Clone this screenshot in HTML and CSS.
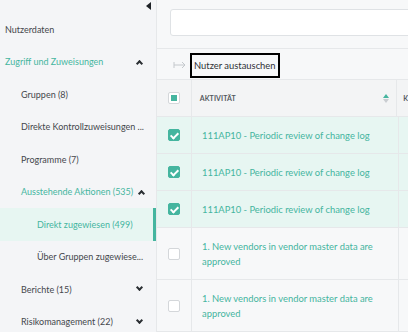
FILE: index.html
```html
<!DOCTYPE html>
<html lang="de">
<head>
    <meta charset="UTF-8">
    <title>Nutzer</title>
    <link rel="stylesheet" href="styles.css">
</head>
<body>
    <div class="layout">
        <aside class="sidebar">
            <span class="collapse"></span>
            <ul class="nav">
                <li class="item lvl0">Nutzerdaten</li>
                <li class="item lvl0 open">Zugriff und Zuweisungen <span class="chev up"></span></li>
                <li class="item lvl1">Gruppen (8)</li>
                <li class="item lvl1">Direkte Kontrollzuweisungen ...</li>
                <li class="item lvl1">Programme (7)</li>
                <li class="item lvl1 open">Ausstehende Aktionen (535) <span class="chev up"></span></li>
                <li class="item lvl2 active">Direkt zugewiesen (499)</li>
                <li class="item lvl2">Über Gruppen zugewiese...</li>
                <li class="item lvl1">Berichte (15) <span class="chev"></span></li>
                <li class="item lvl1">Risikomanagement (22) <span class="chev"></span></li>
            </ul>
        </aside>
        <main class="content">
            <div class="search_bar">
                <div class="search"></div>
            </div>
            <div class="toolbar">
                <svg class="swap" width="14" height="8" viewBox="0 0 14 8">
                    <path d="M1 1v6M1 4h11M9 1l3 3-3 3" fill="none" stroke="#c4c8cc" stroke-width="1"/>
                </svg>
                <button class="btn">Nutzer austauschen</button>
            </div>
            <div class="table">
                <div class="row head">
                    <div class="cell check"><span class="box partial"></span></div>
                    <div class="cell name">AKTIVITÄT <span class="sort"></span></div>
                    <div class="cell rest">K</div>
                </div>
                <div class="row selected">
                    <div class="cell check"><span class="box checked"></span></div>
                    <div class="cell name link">111AP10 - Periodic review of change log</div>
                    <div class="cell rest"></div>
                </div>
                <div class="row selected">
                    <div class="cell check"><span class="box checked"></span></div>
                    <div class="cell name link">111AP10 - Periodic review of change log</div>
                    <div class="cell rest"></div>
                </div>
                <div class="row selected">
                    <div class="cell check"><span class="box checked"></span></div>
                    <div class="cell name link">111AP10 - Periodic review of change log</div>
                    <div class="cell rest"></div>
                </div>
                <div class="row">
                    <div class="cell check"><span class="box"></span></div>
                    <div class="cell name link">1. New vendors in vendor master data are approved</div>
                    <div class="cell rest"></div>
                </div>
                <div class="row">
                    <div class="cell check"><span class="box"></span></div>
                    <div class="cell name link">1. New vendors in vendor master data are approved</div>
                    <div class="cell rest"></div>
                </div>
            </div>
        </main>
    </div>
</body>
</html>
```

FILE: styles.css
```css
:root {
    --teal: #45b59f;
    --teal-light: #e7f6f2;
    --text: #44474c;
    --border: #e6e8ea;
    --side-bg: #f4f5f7;
    --main-bg: #f7f8f9;
}
* {
    box-sizing: border-box;
    margin: 0;
    padding: 0;
}
body {
    font-family: "Lato", sans-serif;
    font-size: 9.4px;
    color: var(--text);
    background: var(--main-bg);
    overflow: hidden;
}
.layout {
    display: flex;
    height: 332px;
}

/* Sidebar */
.sidebar {
    position: relative;
    width: 157px;
    flex-shrink: 0;
    background: var(--side-bg);
    border-right: 1px solid var(--border);
    font-size: 9px;
}
.collapse {
    position: absolute;
    top: 2px;
    right: 5px;
    width: 0;
    height: 0;
    border-top: 4px solid transparent;
    border-bottom: 4px solid transparent;
    border-right: 5px solid #1e2226;
}
.nav {
    list-style: none;
    padding-top: 13px;
}
.nav .item {
    display: flex;
    align-items: center;
    gap: 6px;
    height: 32.5px;
    padding-right: 14px;
    white-space: nowrap;
}
.nav .lvl0 { padding-left: 5px; }
.nav .lvl1 { padding-left: 21px; }
.nav .lvl2 { padding-left: 37px; }
.nav .open { color: var(--teal); }
.nav .active {
    color: var(--teal);
    background: var(--teal-light);
    box-shadow: inset -3px 0 0 var(--teal);
}
.chev {
    flex-shrink: 0;
    margin-left: auto;
    width: 5px;
    height: 5px;
    border-right: 2px solid #2b2f33;
    border-bottom: 2px solid #2b2f33;
    transform: rotate(45deg);
    margin-top: -3px;
}
.chev.up {
    transform: rotate(-135deg);
    margin-top: 3px;
}

/* Main */
.content {
    flex: 1;
    min-width: 0;
    overflow: hidden;
}
.search_bar {
    height: 49px;
    padding: 9px 0 0 13px;
    border-bottom: 1px solid var(--border);
}
.search {
    height: 27px;
    width: 300px;
    background: #fff;
    border: 1px solid #dfe2e5;
    border-radius: 3px;
}
.toolbar {
    display: flex;
    align-items: center;
    height: 31px;
    padding: 2px 0 0 16px;
    gap: 3px;
    border-bottom: 1px solid var(--border);
}
.btn {
    font: inherit;
    color: #2f3236;
    background: transparent;
    border: 2px solid #000;
    padding: 3px 2px;
    line-height: 15px;
}

/* Table */
.row {
    display: flex;
    border-bottom: 1px solid var(--border);
    background: var(--main-bg);
}
.row.head {
    background: #f3f4f5;
}
.row.selected {
    background: var(--teal-light);
}
.cell {
    display: flex;
    align-items: center;
}
.cell.check {
    width: 35px;
    justify-content: center;
    border-right: 1px solid var(--border);
}
.cell.name {
    width: 207px;
    padding: 10.5px 10px;
    line-height: 15px;
    border-right: 1px solid var(--border);
}
.head .cell.name {
    padding-left: 8px;
    font-size: 7px;
    font-weight: 700;
    color: #55595e;
    letter-spacing: 0.1px;
}
.cell.link {
    color: var(--teal);
}
.cell.rest {
    flex: 1;
    padding-left: 6px;
    font-size: 7px;
    font-weight: 700;
    color: #55595e;
}
.box {
    width: 12px;
    height: 12px;
    border: 1px solid #d4d7da;
    border-radius: 2px;
    background: #fff;
    position: relative;
}
.box.partial::after {
    content: "";
    position: absolute;
    left: 2px;
    top: 2px;
    width: 6px;
    height: 6px;
    background: var(--teal);
}
.box.checked {
    background: var(--teal);
    border-color: var(--teal);
}
.box.checked::after {
    content: "";
    position: absolute;
    left: 3px;
    top: 1px;
    width: 3px;
    height: 6px;
    border-right: 2px solid #fff;
    border-bottom: 2px solid #fff;
    transform: rotate(45deg);
}
.sort {
    margin-left: auto;
    margin-right: -3px;
    display: flex;
    flex-direction: column;
    gap: 1px;
}
.sort::before,
.sort::after {
    content: "";
    width: 0;
    height: 0;
    border-left: 3px solid transparent;
    border-right: 3px solid transparent;
}
.sort::before {
    border-bottom: 4px solid var(--teal);
}
.sort::after {
    border-top: 4px solid #c9cdd1;
}
```
